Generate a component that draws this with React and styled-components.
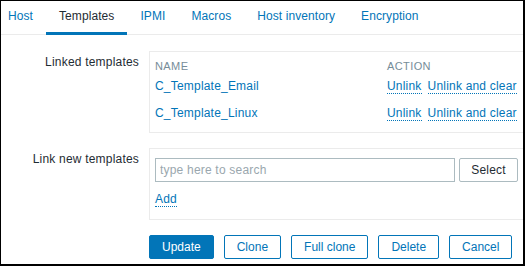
import React from "react";
import styled, { createGlobalStyle } from "styled-components";

const Global = createGlobalStyle`
  html, body { margin: 0; padding: 0; background: #ffffff; }
  body { font-family: "Liberation Sans", Arial, sans-serif; font-size: 12px; color: #1f2c33; letter-spacing: 0.2px; }
  * { box-sizing: border-box; }
`;

const Frame = styled.div`
  width: 525px;
  height: 266px;
  border-style: solid;
  border-color: #000;
  border-width: 1px 2px 2px 1px;
  overflow: hidden;
  background: #fff;
  display: flex;
  flex-direction: column;
`;

const TabNav = styled.ul`
  display: flex;
  margin: 0;
  padding: 0;
  list-style: none;
  border-bottom: 1px solid #ebebeb;
`;

const Tab = styled.li`
  padding: 8px 13px;
  padding-left: ${(p) => (p.$first ? "7px" : "13px")};
  line-height: 15px;
  font-size: 12px;
  letter-spacing: 0.08px;
  margin-bottom: -1px;
  border-bottom: 3px solid ${(p) => (p.$active ? "#0275b8" : "transparent")};
  color: ${(p) => (p.$active ? "#1f2c33" : "#0275b8")};
  white-space: nowrap;
`;

const Form = styled.div`
  display: grid;
  grid-template-columns: 138px minmax(0, 1fr);
  column-gap: 10px;
  row-gap: 15px;
  padding-top: 16px;
`;

const Label = styled.div`
  text-align: right;
  padding-top: 4px;
  line-height: 15px;
  font-size: 12px;
  color: #1f2c33;
  white-space: nowrap;
`;

const Box = styled.div`
  border: 1px solid #ebebeb;
  margin-right: -1px;
  padding: ${(p) => p.$pad};
`;

const Table = styled.table`
  width: 100%;
  border-collapse: collapse;
  border-spacing: 0;
`;

const Th = styled.th`
  text-align: left;
  font-weight: normal;
  font-size: 11px;
  line-height: 14px;
  padding: 2px 0 0;
  color: #768d99;
  text-transform: uppercase;
  letter-spacing: 0.4px;
  width: ${(p) => p.$w || "auto"};
`;

const Td = styled.td`
  padding: 6px 0;
  line-height: 15px;
  font-size: 12px;
  white-space: nowrap;
`;

const Link = styled.span`
  color: #0275b8;
`;

const ActionLink = styled.span`
  color: #0275b8;
  border-bottom: 1px dotted #0275b8;
  margin-right: ${(p) => (p.$spaced ? "6px" : "0")};
`;

const InputRow = styled.div`
  display: flex;
  gap: 4px;
  height: 24px;
`;

const SearchInput = styled.input`
  width: 300px;
  height: 24px;
  border: 1px solid #acbbc0;
  border-radius: 0;
  padding: 0 4px;
  margin: 0;
  font-family: "Liberation Sans", Arial, sans-serif;
  font-size: 12px;
  letter-spacing: 0.2px;
  color: #1f2c33;
  outline: none;
  &::placeholder { color: #9aa7ae; }
`;

const SelectButton = styled.button`
  flex: 1;
  min-width: 0;
  height: 24px;
  border: 1px solid #acbbc0;
  border-radius: 2px;
  background: #fff;
  color: #1f2c33;
  font-family: "Liberation Sans", Arial, sans-serif;
  font-size: 12px;
  letter-spacing: 0.2px;
  padding: 0 8px;
  margin: 0;
`;

const AddRow = styled.div`
  margin-top: 10px;
  line-height: 15px;
`;

const ButtonRow = styled.div`
  grid-column: 2;
  display: flex;
  gap: 10px;
`;

const Button = styled.button`
  height: 24px;
  padding: 0 12px;
  margin: 0;
  border: 1px solid #0275b8;
  border-radius: 2px;
  background: ${(p) => (p.$primary ? "#0275b8" : "#ffffff")};
  color: ${(p) => (p.$primary ? "#ffffff" : "#0275b8")};
  font-family: "Liberation Sans", Arial, sans-serif;
  font-size: 12px;
  letter-spacing: 0;
  line-height: 22px;
  white-space: nowrap;
`;

const tabs = ["Host", "Templates", "IPMI", "Macros", "Host inventory", "Encryption"];
const linked = ["C_Template_Email", "C_Template_Linux"];

export default function App() {
  return (
    <>
      <Global />
      <Frame>
        <TabNav>
          {tabs.map((t, i) => (
            <Tab key={t} $first={i === 0} $active={t === "Templates"}>
              {t}
            </Tab>
          ))}
        </TabNav>
        <Form>
          <Label>Linked templates</Label>
          <Box $pad="5px">
            <Table>
              <thead>
                <tr>
                  <Th>Name</Th>
                  <Th $w="131px">Action</Th>
                </tr>
              </thead>
              <tbody>
                {linked.map((n) => (
                  <tr key={n}>
                    <Td>
                      <Link>{n}</Link>
                    </Td>
                    <Td>
                      <ActionLink $spaced>Unlink</ActionLink>
                      <ActionLink>Unlink and clear</ActionLink>
                    </Td>
                  </tr>
                ))}
              </tbody>
            </Table>
          </Box>

          <Label>Link new templates</Label>
          <Box $pad="9px 5px 12px">
            <InputRow>
              <SearchInput placeholder="type here to search" />
              <SelectButton>Select</SelectButton>
            </InputRow>
            <AddRow>
              <ActionLink>Add</ActionLink>
            </AddRow>
          </Box>

          <ButtonRow>
            <Button $primary>Update</Button>
            <Button>Clone</Button>
            <Button>Full clone</Button>
            <Button>Delete</Button>
            <Button>Cancel</Button>
          </ButtonRow>
        </Form>
      </Frame>
    </>
  );
}
